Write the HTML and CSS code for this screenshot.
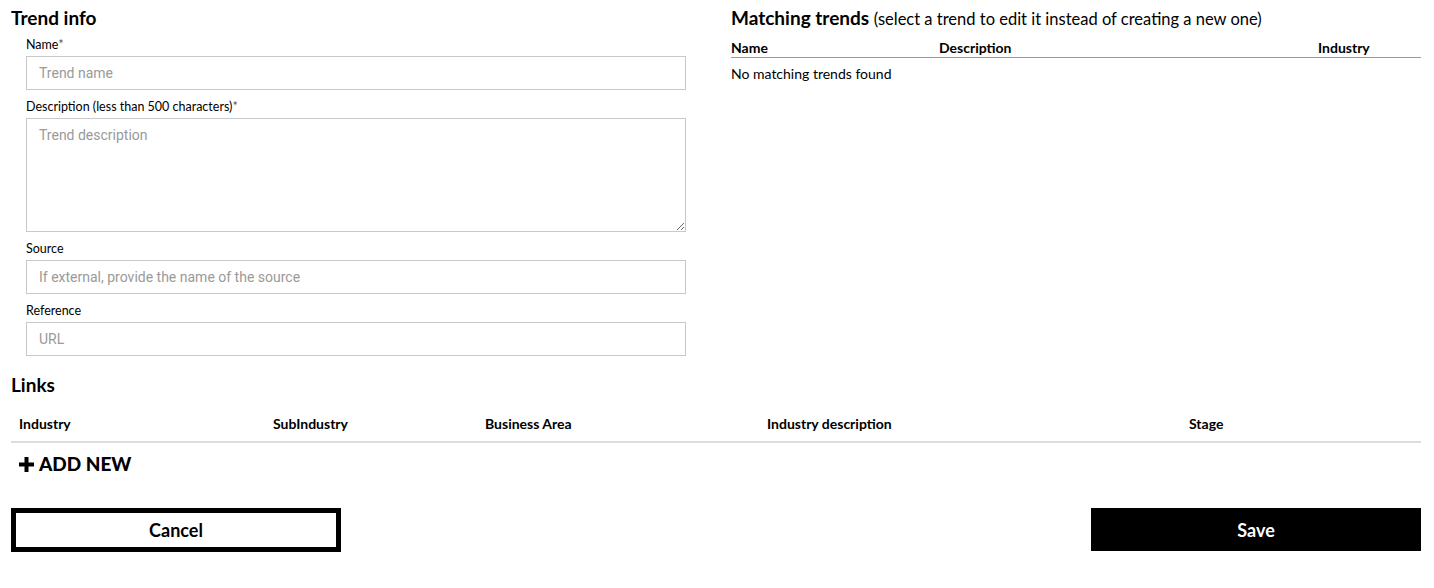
FILE: index.html
```html
<!DOCTYPE html>
<html>
<head>
<meta charset="utf-8">
<link rel="stylesheet" href="styles.css">
</head>
<body>
<div class="page">
  <div class="top">
    <section class="info">
      <h2 class="title">Trend info</h2>
      <div class="fields">
        <label class="label">Name<span class="req">*</span></label>
        <input class="input" type="text" placeholder="Trend name">
        <label class="label">Description (less than 500 characters)<span class="req">*</span></label>
        <textarea class="input area" placeholder="Trend description"></textarea>
        <label class="label">Source</label>
        <input class="input" type="text" placeholder="If external, provide the name of the source">
        <label class="label">Reference</label>
        <input class="input" type="text" placeholder="URL">
      </div>
    </section>
    <section class="matching">
      <h2 class="title">Matching trends <span class="sub">(select a trend to edit it instead of creating a new one)</span></h2>
      <div class="mhead">
        <div>Name</div>
        <div>Description</div>
        <div>Industry</div>
      </div>
      <div class="empty">No matching trends found</div>
    </section>
  </div>
  <h2 class="title links-title">Links</h2>
  <div class="lhead">
    <div>Industry</div>
    <div>SubIndustry</div>
    <div>Business Area</div>
    <div>Industry description</div>
    <div>Stage</div>
  </div>
  <div class="addnew"><svg class="plus" width="15" height="15" viewBox="0 0 15 15"><rect x="5.5" y="0" width="4" height="15" fill="#000"/><rect x="0" y="5.5" width="15" height="4" fill="#000"/></svg>ADD NEW</div>
  <div class="actions">
    <button class="btn cancel">Cancel</button>
    <button class="btn save">Save</button>
  </div>
</div>
</body>
</html>
```
FILE: styles.css
```css
* { box-sizing: border-box; }
body {
  margin: 0;
  font-family: Lato, "Liberation Sans", sans-serif;
  color: #000;
  background: #fff;
}
.page {
  padding: 8px 13px 0 11px;
}
.top {
  display: grid;
  grid-template-columns: 675px 1fr;
  column-gap: 45px;
}
.title {
  margin: 0;
  font-size: 19px;
  line-height: 20px;
  font-weight: 700;
}
.sub {
  font-size: 16.5px;
  font-weight: 400;
}
.fields {
  display: flex;
  flex-direction: column;
  padding-left: 15px;
  padding-top: 8px;
}
.label {
  font-size: 12.5px;
  line-height: 17px;
  margin-bottom: 3px;
}
.req { color: #555; }
.input {
  display: block;
  width: 660px;
  height: 34px;
  border: 1px solid #c8c8c8;
  border-radius: 0;
  padding: 0 12px;
  font-family: Roboto, "Liberation Sans", sans-serif;
  font-size: 14px;
  color: #333;
  margin: 0 0 8px 0;
  outline: none;
}
.input::placeholder { color: #9a9a9a; }
.area {
  height: 114px;
  padding-top: 8px;
  resize: vertical;
}
.mhead {
  display: grid;
  grid-template-columns: 208px 379px 1fr;
  margin-top: 9px;
  font-size: 14px;
  font-weight: 700;
  line-height: 19px;
  border-bottom: 1px solid #999;
}
.empty {
  font-size: 14px;
  line-height: 16px;
  margin-top: 8px;
}
.links-title {
  margin-top: 11px;
}
.lhead {
  display: grid;
  grid-template-columns: 254px 212px 282px 422px 1fr;
  margin-top: 10px;
  height: 38px;
  align-items: center;
  border-bottom: 2px solid #ddd;
  font-size: 14px;
  font-weight: 700;
}
.lhead > div { padding-left: 8px; }
.addnew {
  display: flex;
  align-items: center;
  gap: 5px;
  margin-top: 10px;
  padding-left: 8px;
  font-size: 19px;
  line-height: 22px;
  font-weight: 900;
}
.actions {
  display: flex;
  justify-content: space-between;
  margin-top: 33px;
}
.btn {
  width: 330px;
  height: 44px;
  font-family: Lato, "Liberation Sans", sans-serif;
  font-size: 18px;
  font-weight: 700;
  cursor: pointer;
  border-radius: 0;
}
.cancel {
  background: #fff;
  color: #000;
  border: 5px solid #000;
}
.save {
  background: #000;
  color: #fff;
  border: none;
  height: 43px;
}
```
